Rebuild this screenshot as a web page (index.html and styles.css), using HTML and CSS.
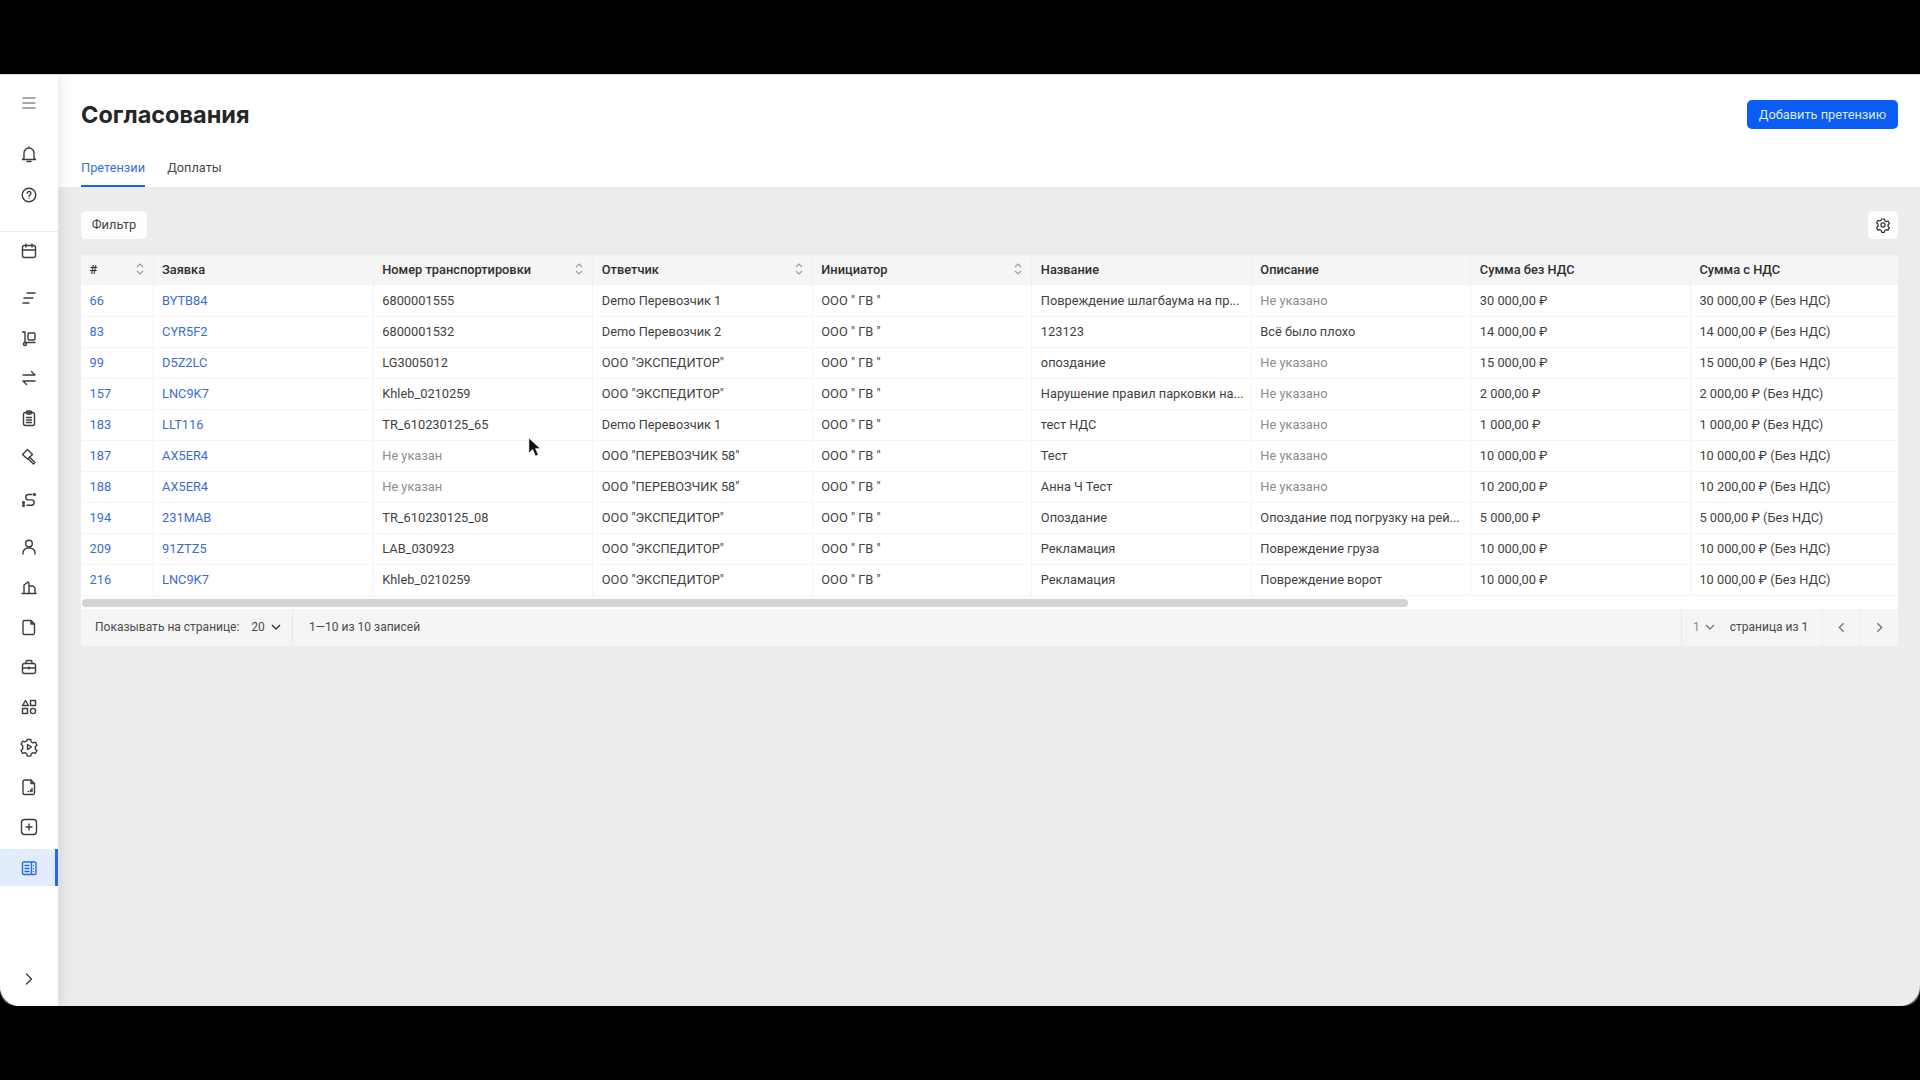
FILE: index.html
```html
<!DOCTYPE html>
<html lang="ru">
<head>
<meta charset="utf-8">
<title>Согласования</title>
<link rel="stylesheet" href="styles.css">
</head>
<body>
<div class="letterbox"></div>
<div class="screen">
<div class="app">
  <aside class="sidebar">
    <div class="side-top">
      <a class="side-item"><svg viewBox="0 0 20 20"><path d="M4 5h12M4 10h12M4 15h12" class="thin"/></svg></a>
      <a class="side-item gap-11"><svg viewBox="0 0 20 20"><path d="M5 14V9a5 5 0 0 1 10 0v5l1.500 1.500h-13zM8 17.500h4M10 4V3"/></svg></a>
      <a class="side-item gap-1"><svg viewBox="0 0 20 20"><circle cx="10" cy="10" r="6.800"/><path d="M8.300 8.200a1.800 1.800 0 1 1 2.700 1.600c-.7.4-1 .8-1 1.500M10 13.400v.1"/></svg></a>
    </div>
    <nav class="side-nav">
      <a class="side-item up-1"><svg viewBox="0 0 20 20"><rect x="3.500" y="4.500" width="13" height="12" rx="2"/><path d="M3.500 9h13M7 3v3M13 3v3"/></svg></a>
      <a class="side-item gap-7"><svg viewBox="0 0 20 20"><path d="M8 5h8M5 10h9M4 15h6"/></svg></a>
      <a class="side-item"><svg viewBox="0 0 20 20"><path d="M3.500 4H6v10M6 14.500h10"/><circle cx="6" cy="16" r="1.500"/><rect x="9" y="5" width="7" height="7" rx="1"/></svg></a>
      <a class="side-item"><svg viewBox="0 0 20 20"><path d="M4 7h12M12.500 3.500 16 7M16 13H4M7.500 16.500 4 13"/></svg></a>
      <a class="side-item"><svg viewBox="0 0 20 20"><rect x="4.500" y="4.500" width="11" height="13" rx="2"/><rect x="7.500" y="3" width="5" height="3" rx="1"/><path d="M7.500 9.500h5M7.500 12h5M7.500 14.500h5"/></svg></a>
      <a class="side-item up-2"><svg viewBox="0 0 20 20"><path d="m3.500 8.500 5-5 5 5-5 4.500zM10.500 11l5.500 5.500-1.500 1.500-5.500-5.500"/></svg></a>
      <a class="side-item gap-4"><svg viewBox="0 0 20 20"><path d="M13 4.500H9.500a2.700 2.700 0 0 0 0 5.400h3a2.700 2.700 0 0 1 0 5.400H8"/><circle cx="15.500" cy="4.500" r=".9"/><circle cx="4.500" cy="12.500" r=".9"/><circle cx="4.500" cy="15.500" r=".9"/></svg></a>
      <a class="side-item gap-7"><svg viewBox="0 0 20 20"><circle cx="10" cy="6.500" r="3.300"/><path d="M4 17v-1a5 5 0 0 1 5-5h2a5 5 0 0 1 5 5v1"/></svg></a>
      <a class="side-item"><svg viewBox="0 0 20 20"><path d="M3 16.500h14M5 16.500V8l4-3 1 1.500V16.500M10 9l4 0 2 2v5.500"/></svg></a>
      <a class="side-item"><svg viewBox="0 0 20 20"><path d="M5.500 3.500H12l3.500 3.500v9a1.500 1.500 0 0 1-1.500 1.500H5.500A1.500 1.500 0 0 1 4 16V5a1.500 1.500 0 0 1 1.500-1.500zM12 3.500V7h3.500"/></svg></a>
      <a class="side-item"><svg viewBox="0 0 20 20"><rect x="3.500" y="6.500" width="13" height="10" rx="2"/><path d="M7 6.500V5a1.500 1.500 0 0 1 1.500-1.500h3A1.500 1.500 0 0 1 13 5v1.500M3.500 11h13M10 10v2"/></svg></a>
      <a class="side-item"><svg viewBox="0 0 20 20"><path d="M6.500 3.500 9.500 8.500h-6z"/><rect x="11.500" y="3.500" width="5" height="5"/><rect x="3.500" y="11.500" width="5" height="5"/><circle cx="14" cy="14" r="2.600"/></svg></a>
      <a class="side-item"><svg viewBox="0 0 20 20"><path d="M8.300 2.500h3.400l.5 2.300 1.900 1.100 2.200-.7 1.700 2.900-1.700 1.600v2.200l1.700 1.600-1.700 2.900-2.200-.7-1.900 1.100-.5 2.300H8.300l-.5-2.300-1.900-1.100-2.200.7-1.700-2.900 1.700-1.600V8.700L2 7.100l1.700-2.900 2.200.7 1.900-1.100z"/><path d="m8.500 7.500 4 2.500-4 2.500z"/></svg></a>
      <a class="side-item"><svg viewBox="0 0 20 20"><path d="M5.500 3H12l3.500 3.500V16a1.500 1.500 0 0 1-1.500 1.500H5.500A1.500 1.500 0 0 1 4 16V4.500A1.500 1.500 0 0 1 5.500 3zM12 3v3.500h3.500"/><path d="M9 14.500h.5M11.500 14.500v-1.500M13 14.500v-3"/></svg></a>
      <a class="side-item"><svg viewBox="0 0 20 20"><rect x="2.500" y="2.500" width="15" height="15" rx="3"/><path d="M10 7v6M7 10h6"/></svg></a>
      <a class="side-item is-active"><svg viewBox="0 0 20 20"><rect x="3.500" y="4" width="9" height="12.500" rx="1.500"/><path d="M12.500 4h3a1.500 1.500 0 0 1 1.500 1.500v9.500a1.500 1.500 0 0 1-1.500 1.500h-3M6 7.500h4M6 10.500h4M6 13.500h4M14.500 7.500v.1M14.500 10.500v.1M14.500 13.500v.1"/></svg></a>
    </nav>
    <a class="side-item side-bottom"><svg viewBox="0 0 20 20"><path d="m7.500 5 5 5-5 5"/></svg></a>
  </aside>

  <main class="main">
    <header class="page-head">
      <div class="title-row">
        <h1 class="title">Согласования</h1>
        <button class="btn-primary">Добавить претензию</button>
      </div>
      <div class="tabs">
        <a class="tab is-current">Претензии</a>
        <a class="tab">Доплаты</a>
      </div>
    </header>

    <section class="content">
      <div class="toolbar">
        <button class="btn-light">Фильтр</button>
        <button class="btn-icon"><svg viewBox="0 0 20 20"><path d="M8.300 2.500h3.400l.5 2.300 1.900 1.100 2.200-.7 1.700 2.900-1.700 1.600v2.200l1.700 1.600-1.700 2.900-2.200-.7-1.900 1.100-.5 2.300H8.300l-.5-2.300-1.900-1.100-2.200.7-1.700-2.900 1.700-1.600V8.700L2 7.100l1.700-2.900 2.200.7 1.900-1.100z"/><circle cx="10" cy="10" r="2.600"/></svg></button>
      </div>

      <div class="table-wrap">
        <table class="grid">
          <colgroup>
            <col class="c-id"><col class="c-req"><col class="c-std"><col class="c-std"><col class="c-std"><col class="c-std"><col class="c-std"><col class="c-std"><col class="c-std">
          </colgroup>
          <thead>
            <tr>
              <th><div class="th-in"><span>#</span><svg class="sort" viewBox="0 0 10 16"><path d="M2 6 5 3l3 3M2 10l3 3 3-3"/></svg></div></th>
              <th>Заявка</th>
              <th><div class="th-in"><span>Номер транспортировки</span><svg class="sort" viewBox="0 0 10 16"><path d="M2 6 5 3l3 3M2 10l3 3 3-3"/></svg></div></th>
              <th><div class="th-in"><span>Ответчик</span><svg class="sort" viewBox="0 0 10 16"><path d="M2 6 5 3l3 3M2 10l3 3 3-3"/></svg></div></th>
              <th><div class="th-in"><span>Инициатор</span><svg class="sort" viewBox="0 0 10 16"><path d="M2 6 5 3l3 3M2 10l3 3 3-3"/></svg></div></th>
              <th>Название</th>
              <th>Описание</th>
              <th>Сумма без НДС</th>
              <th>Сумма с НДС</th>
            </tr>
          </thead>
          <tbody>
            <tr><td class="link">66</td><td class="link">BYTB84</td><td>6800001555</td><td>Demo Перевозчик 1</td><td>ООО " ГВ "</td><td>Повреждение шлагбаума на пр...</td><td class="muted">Не указано</td><td>30 000,00 ₽</td><td>30 000,00 ₽ (Без НДС)</td></tr>
            <tr><td class="link">83</td><td class="link">CYR5F2</td><td>6800001532</td><td>Demo Перевозчик 2</td><td>ООО " ГВ "</td><td>123123</td><td>Всё было плохо</td><td>14 000,00 ₽</td><td>14 000,00 ₽ (Без НДС)</td></tr>
            <tr><td class="link">99</td><td class="link">D5Z2LC</td><td>LG3005012</td><td>ООО "ЭКСПЕДИТОР"</td><td>ООО " ГВ "</td><td>опоздание</td><td class="muted">Не указано</td><td>15 000,00 ₽</td><td>15 000,00 ₽ (Без НДС)</td></tr>
            <tr><td class="link">157</td><td class="link">LNC9K7</td><td>Khleb_0210259</td><td>ООО "ЭКСПЕДИТОР"</td><td>ООО " ГВ "</td><td>Нарушение правил парковки на...</td><td class="muted">Не указано</td><td>2 000,00 ₽</td><td>2 000,00 ₽ (Без НДС)</td></tr>
            <tr><td class="link">183</td><td class="link">LLT116</td><td>TR_610230125_65</td><td>Demo Перевозчик 1</td><td>ООО " ГВ "</td><td>тест НДС</td><td class="muted">Не указано</td><td>1 000,00 ₽</td><td>1 000,00 ₽ (Без НДС)</td></tr>
            <tr><td class="link">187</td><td class="link">AX5ER4</td><td class="muted">Не указан</td><td>ООО "ПЕРЕВОЗЧИК 58"</td><td>ООО " ГВ "</td><td>Тест</td><td class="muted">Не указано</td><td>10 000,00 ₽</td><td>10 000,00 ₽ (Без НДС)</td></tr>
            <tr><td class="link">188</td><td class="link">AX5ER4</td><td class="muted">Не указан</td><td>ООО "ПЕРЕВОЗЧИК 58"</td><td>ООО " ГВ "</td><td>Анна Ч Тест</td><td class="muted">Не указано</td><td>10 200,00 ₽</td><td>10 200,00 ₽ (Без НДС)</td></tr>
            <tr><td class="link">194</td><td class="link">231MAB</td><td>TR_610230125_08</td><td>ООО "ЭКСПЕДИТОР"</td><td>ООО " ГВ "</td><td>Опоздание</td><td>Опоздание под погрузку на рей...</td><td>5 000,00 ₽</td><td>5 000,00 ₽ (Без НДС)</td></tr>
            <tr><td class="link">209</td><td class="link">91ZTZ5</td><td>LAB_030923</td><td>ООО "ЭКСПЕДИТОР"</td><td>ООО " ГВ "</td><td>Рекламация</td><td>Повреждение груза</td><td>10 000,00 ₽</td><td>10 000,00 ₽ (Без НДС)</td></tr>
            <tr><td class="link">216</td><td class="link">LNC9K7</td><td>Khleb_0210259</td><td>ООО "ЭКСПЕДИТОР"</td><td>ООО " ГВ "</td><td>Рекламация</td><td>Повреждение ворот</td><td>10 000,00 ₽</td><td>10 000,00 ₽ (Без НДС)</td></tr>
          </tbody>
        </table>
        <div class="scrollbar"><div class="thumb"></div></div>
      </div>

      <footer class="pager">
        <div class="pager-size">
          <span>Показывать на странице:</span>
          <span class="size-value">20</span>
          <svg class="chev" viewBox="0 0 12 12"><path d="m2 4 4 4 4-4"/></svg>
        </div>
        <div class="pager-total">1—10 из 10 записей</div>
        <div class="pager-page">
          <span class="page-num">1</span>
          <svg class="chev chev-light" viewBox="0 0 12 12"><path d="m2 4 4 4 4-4"/></svg>
          <span class="page-of">страница из 1</span>
        </div>
        <a class="page-btn"><svg viewBox="0 0 12 12"><path d="M8 2 4 6l4 4"/></svg></a>
        <a class="page-btn"><svg viewBox="0 0 12 12"><path d="m4 2 4 4-4 4"/></svg></a>
      </footer>
    </section>
  </main>

  <svg class="cursor" viewBox="0 0 14 22"><path d="M1 1v16l4-4 3 7 3-1-3-7h5z"/></svg>
</div>
</div>
<div class="letterbox"></div>
</body>
</html>
```

FILE: styles.css
```css
* { box-sizing: border-box; }
html, body { margin: 0; height: 100%; }
body {
  width: 1920px;
  height: 1080px;
  overflow: hidden;
  background: #000;
  display: flex;
  flex-direction: column;
  font-family: Roboto, "Noto Sans", sans-serif;
  font-size: 12.800px;
  color: #3f3f3f;
}
a { display: block; }
button { font-family: inherit; border: 0; padding: 0; }

.letterbox { height: 74px; flex: none; background: #000; }

.screen {
  flex: none;
  height: 932px;
  background: linear-gradient(#000 90%, #5c5c5c 98%);
  border-radius: 0 0 16px 16px;
}
.app {
  position: relative;
  height: 100%;
  display: flex;
  background: #ececec;
  border-radius: 0 0 20px 20px;
  overflow: hidden;
  border-top: 1px solid #d8d8d8;
}

/* sidebar */
.sidebar {
  width: 58px;
  flex: none;
  display: flex;
  flex-direction: column;
  background: #fff;
  box-shadow: 5px 0 10px rgba(0, 0, 0, .07);
  z-index: 1;
  padding-top: 8px;
}
.side-top { border-bottom: 1px solid #ececec; padding-bottom: 16px; }
.side-item {
  height: 40px;
  display: flex;
  align-items: center;
  justify-content: center;
}
.side-item svg {
  width: 20px;
  height: 20px;
  fill: none;
  stroke: #3c3c3c;
  stroke-width: 1.400;
  stroke-linecap: round;
  stroke-linejoin: round;
}
.side-item svg .thin { stroke: #8a8a8a; }
.gap-1 { margin-top: 1px; }
.gap-4 { margin-top: 4px; }
.gap-7 { margin-top: 7px; }
.gap-11 { margin-top: 11px; }
.up-1 { margin-top: -1px; }
.up-2 { margin-top: -2px; }
.side-item.is-active {
  height: 37px;
  margin-top: 2px;
  background: #e2ecfd;
  border-right: 3px solid #2468f0;
  padding-left: 3px;
}
.side-item.is-active svg { stroke: #2468f0; }
.side-bottom { margin-top: auto; margin-bottom: 7px; }

/* main */
.main { flex: 1; min-width: 0; display: flex; flex-direction: column; }
.page-head { background: #fff; padding: 25px 22px 0 23px; height: 112px; }
.title-row { display: flex; justify-content: space-between; align-items: center; height: 29px; }
.title { margin: 0; font-family: Inter, Roboto, sans-serif; font-size: 23.500px; line-height: 31px; font-weight: 700; color: #262626; }
.btn-primary {
  width: 151px;
  height: 29px;
  border-radius: 5px;
  background: #0b5cf5;
  color: #dfe9fd;
  font-size: 12.800px;
  padding-bottom: 1px;
}
.tabs { display: flex; gap: 22px; margin-top: 18px; }
.tab {
  height: 40px;
  line-height: 42px;
  color: #4a4a4a;
  border-bottom: 2px solid transparent;
}
.tab.is-current { color: #3b6fe0; border-bottom-color: #1763f5; }

.content { flex: 1; padding: 24px 22px 0 23px; }
.toolbar { display: flex; justify-content: space-between; align-items: center; height: 28px; }
.btn-light {
  width: 66px;
  height: 28px;
  background: #fdfdfd;
  border-radius: 5px;
  color: #444;
  font-size: 12.800px;
  padding-bottom: 1px;
}
.btn-icon {
  width: 30px;
  height: 28px;
  background: #fdfdfd;
  border-radius: 5px;
  display: flex;
  align-items: center;
  justify-content: center;
}
.btn-icon svg { width: 16px; height: 16px; fill: none; stroke: #333; stroke-width: 1.500; stroke-linejoin: round; }

/* table */
.table-wrap { margin-top: 16px; overflow: hidden; background: #fff; }
.grid { width: 1829px; table-layout: fixed; border-collapse: collapse; }
.c-id { width: 72px; }
.c-req { width: 220px; }
.c-std { width: 219.300px; }
.grid th {
  height: 30px;
  padding: 0 8px 2px 8.500px;
  background: #f5f5f6;
  font-weight: 500;
  text-align: left;
  color: #2e2e2e;
  border-left: 1px solid #efeff0;
}
.grid th:first-child, .grid td:first-child { border-left: 0; }
.th-in { display: flex; align-items: center; justify-content: space-between; }
.sort { width: 10px; height: 16px; fill: none; stroke: #9a9a9a; stroke-width: 1.100; }
.grid td {
  height: 31px;
  padding: 0 8px 0 8.500px;
  border-left: 1px solid #f3f3f3;
  border-bottom: 1px solid #f5f5f5;
  white-space: nowrap;
  overflow: hidden;
}
.grid td.link { color: #3b6cd6; }
.grid td.muted { color: #8c8c8c; }
.scrollbar { height: 13px; padding: 3px 1px 2px; }
.thumb { width: 1326px; height: 8px; border-radius: 4px; background: #d3d3d3; }

/* pager */
.pager {
  display: flex;
  align-items: center;
  height: 37px;
  background: #f5f5f6;
  color: #4a4a4a;
  font-size: 12px;
  white-space: nowrap;
}
.pager-size {
  display: flex;
  align-items: center;
  width: 212px;
  height: 100%;
  padding-left: 14px;
  border-right: 1px solid #e8e8e8;
}
.size-value { margin-left: 12px; }
.chev { width: 12px; height: 12px; margin-left: 5px; fill: none; stroke: #333; stroke-width: 1.400; }
.chev-light { stroke: #777; margin-left: 4px; }
.pager-total { padding-left: 16px; flex: 1; }
.pager-page {
  display: flex;
  align-items: center;
  height: 100%;
  width: 141px;
  padding-left: 11px;
  border-left: 1px solid #e8e8e8;
}
.page-num { color: #888; }
.page-of { margin-left: 14px; }
.page-btn {
  width: 38px;
  height: 100%;
  display: flex;
  align-items: center;
  justify-content: center;
  border-left: 1px solid #ededed;
}
.page-btn svg { width: 13px; height: 13px; fill: none; stroke: #777; stroke-width: 1.300; }

.cursor {
  position: absolute;
  left: 528px;
  top: 362px;
  width: 13px;
  height: 21px;
  fill: #111;
  stroke: #fff;
  stroke-width: .5;
  z-index: 2;
}
```
